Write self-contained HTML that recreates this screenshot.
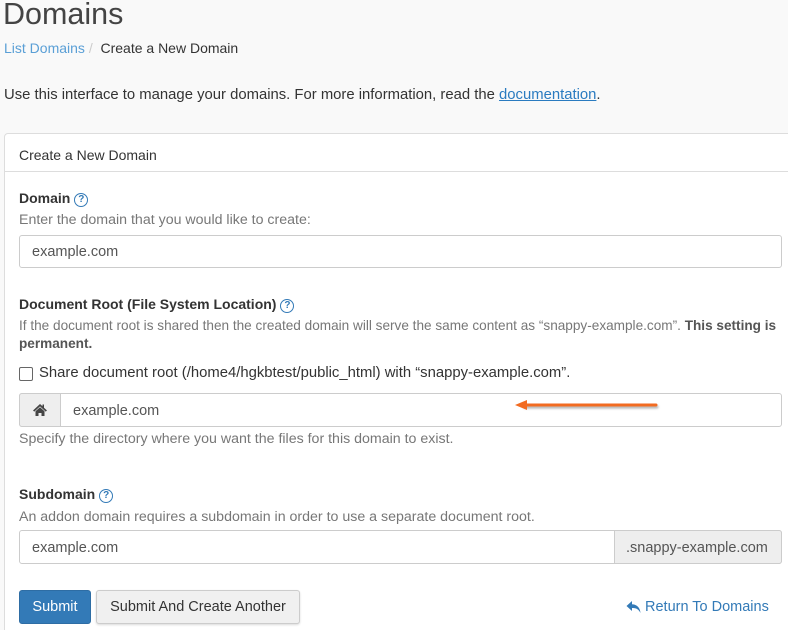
<!DOCTYPE html>
<html style="height:630px;overflow:hidden"><head><style>
body{margin:0;width:788px;height:630px;background:#f9f9f9;font-family:"Liberation Sans",sans-serif;color:#333;position:relative;overflow:hidden}
.a{position:absolute;white-space:nowrap}
.panel{position:absolute;left:4px;top:133px;width:800px;height:520px;background:#fff;border:1px solid #ddd;border-radius:4px}
.hdr{position:absolute;left:4px;top:133px;width:800px;height:38px;border-bottom:1px solid #ddd}
.inp{position:absolute;background:#fff;border:1px solid #ccc;border-radius:3px;box-sizing:border-box}
.lbl{font-weight:bold;font-size:14px;color:#333}
.help{font-size:14.2px;color:#777}
.q{display:inline-block;width:12px;height:12px;border:1.5px solid #337ab7;border-radius:50%;color:#337ab7;font-size:10px;line-height:12px;text-align:center;font-weight:bold;vertical-align:1px;margin-left:4px}
</style></head><body>
<div class="a" style="left:3px;top:-3px;font-size:30.5px;color:#444">Domains</div>
<div class="a" style="left:4px;top:40px;font-size:14px;"><span style="color:#5a9fd6">List Domains</span> <span style="color:#ccc">/</span>&nbsp; Create a New Domain</div>
<div class="a" style="left:4px;top:87px;font-size:14.85px">Use this interface to manage your domains. For more information, read the <span style="color:#2a7bc0;text-decoration:underline">documentation</span>.</div>
<div class="panel"></div>
<div class="hdr"></div>
<div class="a" style="left:19px;top:147px;font-size:14px">Create a New Domain</div>

<div class="a lbl" style="left:19px;top:190px">Domain<span class="q">?</span></div>
<div class="a help" style="left:19px;top:212px">Enter the domain that you would like to create:</div>
<div class="inp" style="left:19px;top:235px;width:763px;height:33px"></div>
<div class="a" style="left:32px;top:244px;font-size:14.5px;color:#555">example.com</div>

<div class="a lbl" style="left:19px;top:296px">Document Root (File System Location)<span class="q">?</span></div>
<div class="a help" style="left:19px;top:318px;font-size:13.6px">If the document root is shared then the created domain will serve the same content as “snappy-example.com”. <b style="color:#555">This setting is</b></div>
<div class="a help" style="left:19px;top:336px;font-size:13.6px"><b style="color:#555">permanent.</b></div>
<div class="a" style="left:19px;top:367px;width:12px;height:12px;border:1.5px solid #666;border-radius:2px;background:#fff"></div>
<div class="a" style="left:39px;top:365px;font-size:14.85px">Share document root (/home4/hgkbtest/public_html) with “snappy-example.com”.</div>
<div class="inp" style="left:19px;top:393px;width:763px;height:34px"></div>
<div class="a" style="left:19px;top:393px;width:42px;height:34px;background:#eee;border:1px solid #ccc;border-radius:3px 0 0 3px;box-sizing:border-box"></div>
<svg class="a" style="left:32px;top:403px" width="16" height="14" viewBox="0 0 16 14"><path d="M8 1 L1 7.5 L2.3 8.6 L8 3.4 L13.7 8.6 L15 7.5 L12 4.7 V1.5 H10.5 V3.3 Z" fill="#444"/><path d="M3.5 8.3 L8 4.3 L12.5 8.3 V13 H9.5 V10 H6.5 V13 H3.5 Z" fill="#444"/></svg>
<div class="a" style="left:73px;top:403px;font-size:14.5px;color:#555">example.com</div>
<svg class="a" style="left:510px;top:398px" width="155" height="16"><line x1="14" y1="7" x2="146" y2="7" stroke="#f26b21" stroke-width="3" stroke-linecap="round" style="filter:drop-shadow(1px 2px 1px rgba(0,0,0,.3))"/><path d="M5 7 L17 2 L17 12 Z" fill="#f26b21"/></svg>
<div class="a help" style="left:19px;top:431px">Specify the directory where you want the files for this domain to exist.</div>

<div class="a lbl" style="left:19px;top:486px">Subdomain<span class="q">?</span></div>
<div class="a help" style="left:19px;top:509px">An addon domain requires a subdomain in order to use a separate document root.</div>
<div class="inp" style="left:19px;top:530px;width:763px;height:34px"></div>
<div class="a" style="left:614px;top:530px;width:168px;height:34px;background:#eee;border:1px solid #ccc;border-radius:0 3px 3px 0;box-sizing:border-box"></div>
<div class="a" style="left:32px;top:540px;font-size:14.5px;color:#555">example.com</div>
<div class="a" style="left:626px;top:540px;font-size:14.5px;color:#555">.snappy-example.com</div>

<div class="a" style="left:19px;top:590px;width:72px;height:34px;background:#337ab7;border:1px solid #2e6da4;border-radius:3px;box-sizing:border-box;color:#fff;font-size:14.5px;text-align:center;line-height:33px">Submit</div>
<div class="a" style="left:96px;top:590px;width:204px;height:34px;background:#f0f0f0;border:1px solid #ccc;border-radius:3px;box-sizing:border-box;font-size:14.5px;text-align:center;line-height:33px;box-shadow:0 1px 2px rgba(0,0,0,.15)">Submit And Create Another</div>
<svg class="a" style="left:626px;top:600px" width="16" height="14" viewBox="0 0 16 14"><path d="M6 1 L0.5 6 L6 11 V8 C10 8 12.5 9 14.5 13 C14 7.5 11 4.5 6 4.3 Z" fill="#337ab7"/></svg>
<div class="a" style="left:645px;top:599px;font-size:14.5px;color:#337ab7">Return To Domains</div>
</body></html>
